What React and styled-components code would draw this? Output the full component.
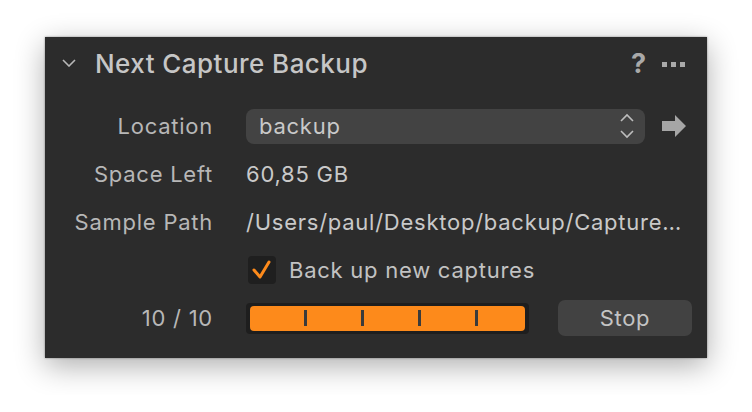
import React from 'react';
import styled, { createGlobalStyle } from 'styled-components';

const GlobalStyle = createGlobalStyle`
  body {
    margin: 0;
    background: #ffffff;
    font-family: Inter, "Liberation Sans", sans-serif;
  }
`;

const Page = styled.div`
  padding: 37px 45px;
`;

const Panel = styled.div`
  width: 662px;
  height: 321px;
  box-sizing: border-box;
  background: #2c2c2c;
  box-shadow: 0 8px 28px rgba(0, 0, 0, 0.32), 0 0 2px rgba(0, 0, 0, 0.4);
  padding: 0 15px 16px 0;
  display: flex;
  flex-direction: column;
`;

const Header = styled.div`
  height: 52px;
  display: flex;
  align-items: center;
  padding-left: 17px;
`;

const Title = styled.div`
  flex: 1;
  margin-left: 19px;
  font-size: 26px;
  font-weight: 500;
  color: #c6c6c6;
  letter-spacing: 0.45px;
`;

const HeaderIcons = styled.div`
  display: flex;
  align-items: center;
  gap: 16px;
  padding-right: 7px;
`;

const Help = styled.span`
  font-size: 27px;
  font-weight: 700;
  color: #a9a9a9;
  line-height: 1;
`;

const Dots = styled.div`
  display: flex;
  gap: 4px;
  padding-top: 2px;
`;

const Dot = styled.span`
  width: 5px;
  height: 5px;
  background: #a9a9a9;
`;

const Form = styled.div`
  margin-top: 13px;
  display: grid;
  grid-template-columns: 168px 1fr;
  grid-auto-rows: 48px;
  column-gap: 33px;
  align-items: center;
  font-size: 22px;
  letter-spacing: 0.75px;
`;

const Label = styled.div`
  text-align: right;
  color: #b7b7b7;
  white-space: nowrap;
`;

const Value = styled.div`
  color: #c9c9c9;
  white-space: nowrap;
`;

const Cell = styled.div`
  display: flex;
  align-items: center;
  min-width: 0;
`;

const Select = styled.div`
  flex: 1;
  height: 35px;
  box-sizing: border-box;
  border-radius: 8px;
  background: #434343;
  display: flex;
  align-items: center;
  padding: 0 10px 0 13px;
  color: #c9c9c9;
`;

const SelectText = styled.span`
  flex: 1;
`;

const ArrowSlot = styled.div`
  width: 47px;
  display: flex;
  justify-content: flex-end;
  padding-right: 6px;
  box-sizing: border-box;
`;

const Check = styled.div`
  display: flex;
  align-items: center;
  gap: 13px;
  padding-left: 2px;
  color: #c2c2c2;
`;

const Box = styled.div`
  width: 28px;
  height: 28px;
  border-radius: 4px;
  background: #1f1f1f;
  display: flex;
  align-items: center;
  justify-content: center;
`;

const Track = styled.div`
  width: 283px;
  height: 31px;
  box-sizing: border-box;
  background: #1e1e1e;
  border-radius: 4px;
  padding: 3px 4px;
`;

const Fill = styled.div`
  height: 100%;
  border-radius: 4px;
  background: #fd8a1b;
  display: flex;
  align-items: center;
  gap: 54px;
  padding-left: 54px;
`;

const Tick = styled.span`
  width: 3px;
  height: 16px;
  background: #3b3b3b;
`;

const StopButton = styled.button`
  margin-left: auto;
  width: 134px;
  height: 36px;
  border: none;
  border-radius: 7px;
  background: #424242;
  color: #c4c4c4;
  font-family: inherit;
  font-size: 22px;
  letter-spacing: 0.7px;
  padding: 0;
`;

const Chevron = () => (
  <svg width="14" height="8" viewBox="0 0 14 8">
    <polyline points="1,1 7,7 13,1" fill="none" stroke="#b8b8b8" strokeWidth="1.6" />
  </svg>
);

const Stepper = () => (
  <svg width="16" height="26" viewBox="0 0 16 26">
    <polyline points="2,8 8,2 14,8" fill="none" stroke="#bdbdbd" strokeWidth="1.6" />
    <polyline points="2,18 8,24 14,18" fill="none" stroke="#bdbdbd" strokeWidth="1.6" />
  </svg>
);

const Arrow = () => (
  <svg width="24" height="22" viewBox="0 0 24 22">
    <path d="M0 6 H13 V0 L24 11 L13 22 V16 H0 Z" fill="#a6a6a6" />
  </svg>
);

const Tickmark = () => (
  <svg width="20" height="20" viewBox="0 0 20 20">
    <polyline points="2,10 8,17 17,2" fill="none" stroke="#fd8a1b" strokeWidth="3" strokeLinecap="round" strokeLinejoin="round" />
  </svg>
);

const App = () => {
  return (
    <Page>
      <GlobalStyle />
      <Panel>
        <Header>
          <Chevron />
          <Title>Next Capture Backup</Title>
          <HeaderIcons>
            <Help>?</Help>
            <Dots>
              <Dot />
              <Dot />
              <Dot />
            </Dots>
          </HeaderIcons>
        </Header>
        <Form>
          <Label>Location</Label>
          <Cell>
            <Select>
              <SelectText>backup</SelectText>
              <Stepper />
            </Select>
            <ArrowSlot>
              <Arrow />
            </ArrowSlot>
          </Cell>

          <Label>Space Left</Label>
          <Value>60,85 GB</Value>

          <Label>Sample Path</Label>
          <Value>/Users/paul/Desktop/backup/Capture…</Value>

          <div />
          <Check>
            <Box>
              <Tickmark />
            </Box>
            Back up new captures
          </Check>

          <Label>10 / 10</Label>
          <Cell>
            <Track>
              <Fill>
                <Tick />
                <Tick />
                <Tick />
                <Tick />
              </Fill>
            </Track>
            <StopButton>Stop</StopButton>
          </Cell>
        </Form>
      </Panel>
    </Page>
  );
};

export default App;
